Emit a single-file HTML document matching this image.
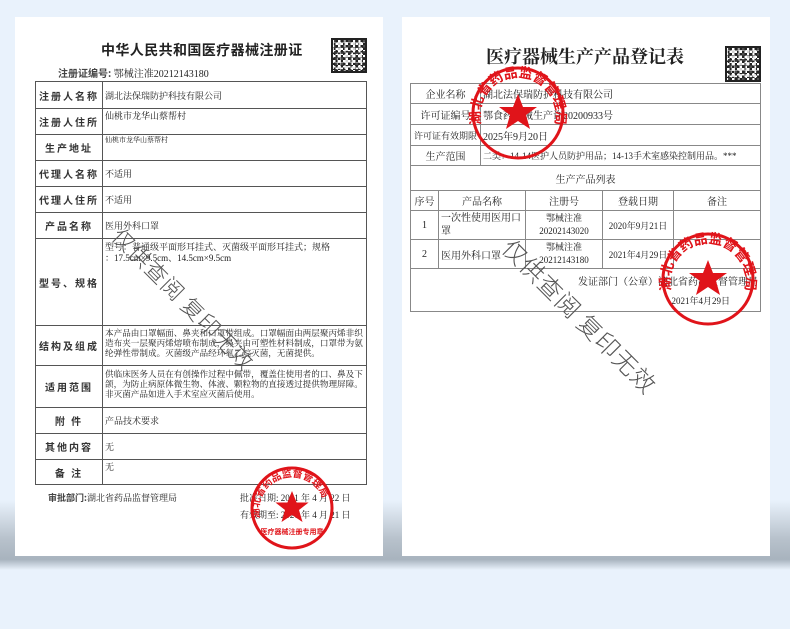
<!DOCTYPE html>
<html><head><meta charset="utf-8"><style>
*{margin:0;padding:0;box-sizing:border-box}
body{width:790px;height:629px;background:#e9f2fc;position:relative;overflow:hidden;font-family:"Liberation Serif","Noto Serif CJK SC","Noto Sans CJK SC",serif;color:#222}
.shadow{position:absolute;left:0;top:500px;width:790px;height:70px;background:linear-gradient(#e9f2fc,#b8c2cc 55%,#a8b3be 85%,#e9f2fc)}
.page{position:absolute;top:17px;width:368px;height:539px;background:#fff}
.a{position:absolute;white-space:nowrap}
table{position:absolute;border-collapse:collapse}
td{border:1.5px solid #555;font-size:9px;padding:0 2px;vertical-align:top}
.l td.k{text-align:center;vertical-align:middle;font-family:"Noto Sans CJK SC",sans-serif;font-size:10px;letter-spacing:2px;font-weight:bold;color:#333}
.r td{border:1px solid #888;font-size:10px;vertical-align:middle;white-space:nowrap}
.c{text-align:center}
.qr{position:absolute;border:2px solid #222;background:
conic-gradient(#222 25%,#fff 0 50%,#222 0 75%,#fff 0) 0 0/5px 5px,#222;}
.qr::after{content:"";position:absolute;inset:0;background:conic-gradient(#fff 25%,transparent 0 50%,#222 0 75%,transparent 0) 1px 2px/7px 6px;opacity:.8}
.wm{position:absolute;color:#555;font-family:"Noto Sans CJK SC",sans-serif;font-size:22px;transform-origin:0 0;transform:rotate(45deg);white-space:nowrap;letter-spacing:1px;font-weight:300}
</style></head><body>
<div class="shadow"></div>
<div class="page" style="left:15px"></div>
<div class="page" style="left:402px"></div>

<!-- left page -->
<div class="a" style="left:101px;top:40px;font-size:14px;font-weight:bold;letter-spacing:0.4px;font-family:'Noto Sans CJK SC',sans-serif">中华人民共和国医疗器械注册证</div>
<div class="qr" style="left:331px;top:38px;width:36px;height:35px"></div>
<div class="a" style="left:58px;top:65px;font-size:10px"><span style="font-family:'Noto Sans CJK SC',sans-serif;font-weight:bold;color:#444">注册证编号:</span> 鄂械注准20212143180</div>
<table class="l" style="left:35px;top:81px;width:332px">
<colgroup><col style="width:67px"><col></colgroup>
<tr style="height:27px"><td class="k">注册人名称</td><td style="vertical-align:middle">湖北法保瑞防护科技有限公司</td></tr>
<tr style="height:26px"><td class="k">注册人住所</td><td>仙桃市龙华山蔡帮村</td></tr>
<tr style="height:26px"><td class="k">生产地址</td><td style="font-size:7px">仙桃市龙华山蔡帮村</td></tr>
<tr style="height:26px"><td class="k">代理人名称</td><td style="vertical-align:middle">不适用</td></tr>
<tr style="height:26px"><td class="k">代理人住所</td><td style="vertical-align:middle">不适用</td></tr>
<tr style="height:26px"><td class="k">产品名称</td><td style="vertical-align:middle">医用外科口罩</td></tr>
<tr style="height:87px"><td class="k">型号、规格</td><td style="line-height:11px;padding-top:3px">型号：普通级平面形耳挂式、灭菌级平面形耳挂式；规格<br>：17.5cm×9.5cm、14.5cm×9.5cm</td></tr>
<tr style="height:40px"><td class="k">结构及组成</td><td style="line-height:10px;padding-top:2px;font-size:8.6px">本产品由口罩幅面、鼻夹和口罩带组成。口罩幅面由两层聚丙烯非织造布夹一层聚丙烯熔喷布制成，鼻夹由可塑性材料制成，口罩带为氨纶弹性带制成。灭菌级产品经环氧乙烷灭菌，无菌提供。</td></tr>
<tr style="height:42px"><td class="k">适用范围</td><td style="line-height:10px;padding-top:3px;font-size:8.6px">供临床医务人员在有创操作过程中佩带，覆盖住使用者的口、鼻及下颌，为防止病原体微生物、体液、颗粒物的直接透过提供物理屏障。非灭菌产品如进入手术室应灭菌后使用。</td></tr>
<tr style="height:26px"><td class="k">附 件</td><td style="vertical-align:middle">产品技术要求</td></tr>
<tr style="height:26px"><td class="k">其他内容</td><td style="vertical-align:middle">无</td></tr>
<tr style="height:25px"><td class="k">备 注</td><td>无</td></tr>
</table>
<div class="a" style="left:48px;top:491px;font-size:9px"><b style="font-family:'Noto Sans CJK SC',sans-serif;color:#444">审批部门:</b>湖北省药品监督管理局</div>
<div class="a" style="left:240px;top:491px;font-size:9px">批准日期: 2021 年 4 月 22 日</div>
<div class="a" style="left:240px;top:508px;font-size:9px">有效期至: 2026 年 4 月 21 日</div>

<!-- right page -->
<div class="a" style="left:486px;top:43px;font-size:18px;font-weight:bold;font-family:'Noto Serif CJK SC',serif">医疗器械生产产品登记表</div>
<div class="qr" style="left:725px;top:46px;width:36px;height:36px"></div>
<table class="r" style="left:410px;top:83px;width:351px">
<colgroup><col style="width:28px"><col style="width:42px"><col style="width:45px"><col style="width:77px"><col style="width:71px"><col></colgroup>
<tr style="height:20px"><td colspan="2" class="c">企业名称</td><td colspan="4">湖北法保瑞防护科技有限公司</td></tr>
<tr style="height:21px"><td colspan="2" class="c">许可证编号</td><td colspan="4">鄂食药监械生产许20200933号</td></tr>
<tr style="height:21px"><td colspan="2" class="c" style="font-size:9px;padding:0">许可证有效期限</td><td colspan="4">2025年9月20日</td></tr>
<tr style="height:20px"><td colspan="2" class="c">生产范围</td><td colspan="4" style="font-size:9px">二类：14-14医护人员防护用品；14-13手术室感染控制用品。***</td></tr>
<tr style="height:25px"><td colspan="6" class="c">生产产品列表</td></tr>
<tr style="height:20px"><td class="c">序号</td><td colspan="2" class="c">产品名称</td><td class="c">注册号</td><td class="c">登载日期</td><td class="c">备注</td></tr>
<tr style="height:29px"><td class="c">1</td><td colspan="2" style="line-height:13px;white-space:normal">一次性使用医用口罩</td><td class="c" style="font-size:9px;line-height:13px">鄂械注准<br>20202143020</td><td class="c" style="font-size:9px">2020年9月21日</td><td></td></tr>
<tr style="height:29px"><td class="c">2</td><td colspan="2">医用外科口罩</td><td class="c" style="font-size:9px;line-height:13px">鄂械注准<br>20212143180</td><td class="c" style="font-size:9px">2021年4月29日</td><td></td></tr>
<tr style="height:43px"><td colspan="6" style="text-align:right;vertical-align:top;padding-top:5px;line-height:18px">发证部门（公章）湖北省药品监督管理局<br><span style="font-size:9px;padding-right:28px">2021年4月29日</span></td></tr>
</table>

<!-- watermarks -->
<div class="wm" style="left:128px;top:220px">仅供查阅 复印无效</div>
<div class="wm" style="left:520px;top:230px;font-size:24px">仅供查阅 复印无效</div>

<!-- stamps -->
<svg width="790" height="629" style="position:absolute;left:0;top:0" xmlns="http://www.w3.org/2000/svg">
<defs>
<path id="arc" d="M -32 10 A 33 33 0 1 1 32 10"/>
</defs>
<g transform="translate(292,508)" fill="#e0141a" stroke="none">
<circle r="40" fill="none" stroke="#e0141a" stroke-width="3"/>
<polygon points="0,-17 4.6,-5.5 16.6,-5.5 7,2 10.5,14 0,7 -10.5,14 -7,2 -16.6,-5.5 -4.6,-5.5"/>
<text font-size="10" font-weight="bold" font-family="Noto Sans CJK SC,sans-serif"><textPath href="#arc">湖北省药品监督管理局</textPath></text>
<text y="26" text-anchor="middle" font-size="7" font-weight="bold" font-family="Noto Sans CJK SC,sans-serif">医疗器械注册专用章</text>
</g>
<g transform="translate(518,113)" fill="#e0141a">
<circle r="45" fill="none" stroke="#e0141a" stroke-width="3"/>
<polygon points="0,-19 5,-6 19,-6 8,2 12,16 0,8 -12,16 -8,2 -19,-6 -5,-6"/>
<text font-size="12" font-weight="bold" font-family="Noto Sans CJK SC,sans-serif" transform="scale(1.15)"><textPath href="#arc">湖北省药品监督管理局</textPath></text>
</g>
<g transform="translate(708,279)" fill="#e0141a">
<circle r="45" fill="none" stroke="#e0141a" stroke-width="3"/>
<polygon points="0,-19 5,-6 19,-6 8,2 12,16 0,8 -12,16 -8,2 -19,-6 -5,-6"/>
<text font-size="12" font-weight="bold" font-family="Noto Sans CJK SC,sans-serif" transform="scale(1.15)"><textPath href="#arc">湖北省药品监督管理局</textPath></text>
</g>
</svg>
</body></html>
